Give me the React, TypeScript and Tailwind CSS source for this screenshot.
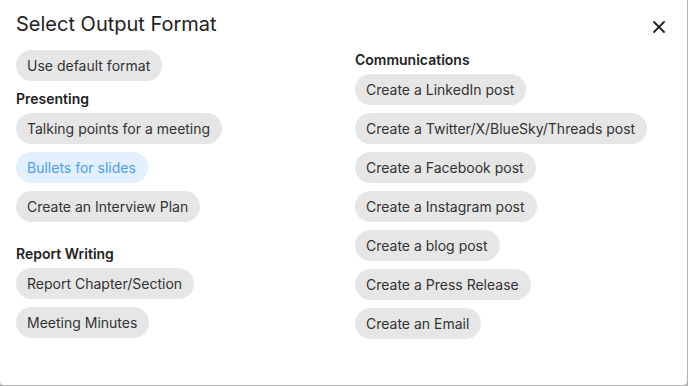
import React, { useState } from 'react';

const Chip = ({ label, active, onClick }: { label: string; active?: boolean; onClick: () => void }) => (
  <button
    onClick={onClick}
    className={`h-[31px] pl-[11px] pr-3 rounded-full text-[14px] leading-none whitespace-nowrap self-start ${
      active ? 'bg-[#e2f0ff] text-[#4d9ef5]' : 'bg-[#e6e6e6] text-[#333333]'
    }`}
  >
    {label}
  </button>
);

const Label = ({ children }: { children: React.ReactNode }) => (
  <h3 className="h-5 mb-1 text-[14px] leading-5 font-semibold text-[#222222]">{children}</h3>
);

export default function App() {
  const [selected, setSelected] = useState('Bullets for slides');

  const presenting = ['Talking points for a meeting', 'Bullets for slides', 'Create an Interview Plan'];
  const report = ['Report Chapter/Section', 'Meeting Minutes'];
  const comms = [
    'Create a LinkedIn post',
    'Create a Twitter/X/BlueSky/Threads post',
    'Create a Facebook post',
    'Create a Instagram post',
    'Create a blog post',
    'Create a Press Release',
    'Create an Email',
  ];

  const chips = (items: string[]) =>
    items.map((i) => <Chip key={i} label={i} active={selected === i} onClick={() => setSelected(i)} />);

  return (
    <div className="w-[688px] h-[386px] bg-[#b4b4b4]" style={{ fontFamily: 'Inter, "Noto Sans", sans-serif' }}>
      <div className="w-[687px] h-[385px] bg-white rounded-b-[4px]">
        <div className="flex items-start justify-between pl-4 pr-[22px] pt-[10px]">
          <h2 className="text-[20px] leading-[28px] text-[#222222]">Select Output Format</h2>
          <button className="mt-[11px] text-[#222222]">
            <svg width="12" height="12" viewBox="0 0 12 12" fill="none" stroke="currentColor" strokeWidth="1.8" strokeLinecap="round">
              <path d="M1 1L11 11M11 1L1 11" />
            </svg>
          </button>
        </div>
        <div className="flex px-4">
          <div className="w-[339px] flex flex-col pt-[12px]">
            <Chip label="Use default format" active={selected === 'Use default format'} onClick={() => setSelected('Use default format')} />
            <div className="mt-2 flex flex-col">
              <Label>Presenting</Label>
              <div className="flex flex-col gap-2">{chips(presenting)}</div>
            </div>
            <div className="mt-[22px] flex flex-col">
              <Label>Report Writing</Label>
              <div className="flex flex-col gap-2">{chips(report)}</div>
            </div>
          </div>
          <div className="flex flex-col pt-3">
            <Label>Communications</Label>
            <div className="flex flex-col gap-2">{chips(comms)}</div>
          </div>
        </div>
      </div>
    </div>
  );
}
